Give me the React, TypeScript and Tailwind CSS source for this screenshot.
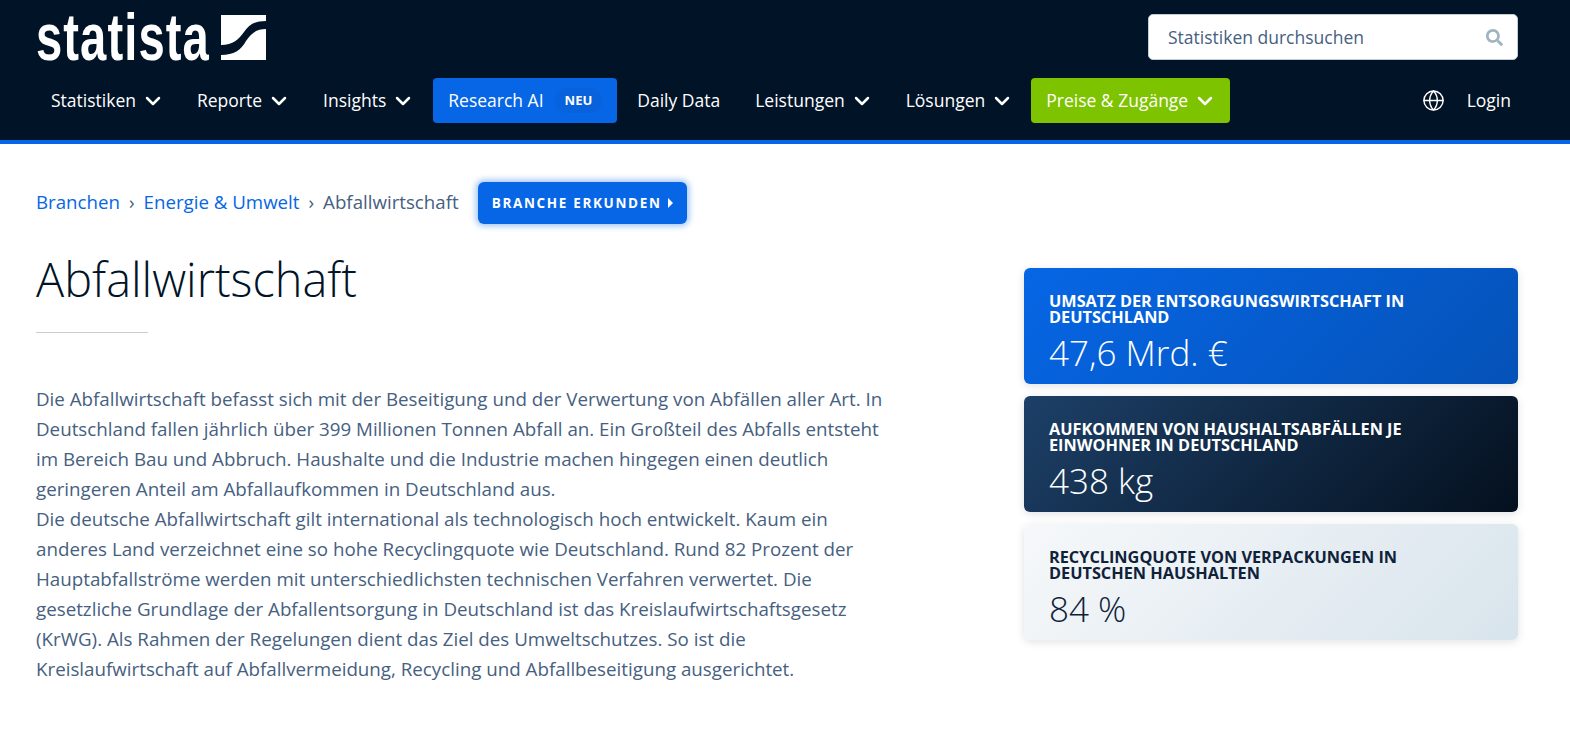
import React from 'react';
import { ChevronDown, Globe } from 'lucide-react';
import { FaSearch } from 'react-icons/fa';

const sans = "font-['Open_Sans',sans-serif]";

const NavItem: React.FC<{ label: string; chevron?: boolean }> = ({ label, chevron = true }) => (
  <div className="flex h-[45px] items-center gap-[5px] px-[15px] text-[17.5px] text-white">
    <span>{label}</span>
    {chevron && <ChevronDown className="h-[24px] w-[24px]" strokeWidth={2.5} />}
  </div>
);

const Logo: React.FC = () => (
  <div className="mt-[1px] flex h-[45px] w-[230px] items-center justify-between">
    <div className="w-[172px] origin-left scale-x-[0.715] font-['Liberation_Sans',sans-serif] text-[66px] leading-[45px] font-bold tracking-[1.5px] whitespace-nowrap text-white">
      statista
    </div>
    <svg viewBox="0 0 45 45" className="h-[45px] w-[45px]">
      <path
        fill="#fff"
        d="M0 0H45V6C33 6 28 10 23 17C18 24 12 30 0 30Z M45 14V45H0V40C13 40 20 35 25 26C30 18 36 14 45 14Z"
      />
    </svg>
  </div>
);

const StatCard: React.FC<{ title: string; value: string; className: string }> = ({ title, value, className }) => (
  <div className={`h-[116px] rounded-[6px] pt-[25px] pr-[20px] pl-[25px] shadow-[0_2px_8px_rgba(0,20,40,0.12)] ${className}`}>
    <div className="text-[16.3px] leading-[16.2px] font-bold uppercase">{title}</div>
    <div className="mt-[6px] text-[35px] leading-[44px] font-light">{value}</div>
  </div>
);

export default function App() {
  return (
    <div className={`min-h-[740px] bg-white ${sans}`}>
      <header className="h-[144px] border-b-[4px] border-[#0666e5] bg-[#001327] pr-[52px] pl-[36px]">
        <div className="flex items-start justify-between pt-[14px]">
          <Logo />
          <div className="flex h-[46px] w-[370px] items-center justify-between rounded-[5px] border border-[#c5cdd4] bg-white pr-[14px] pl-[19px] text-[17.5px] text-[#46607f]">
            <span>Statistiken durchsuchen</span>
            <FaSearch className="h-[17px] w-[17px] text-[#9fb4bf]" />
          </div>
        </div>
        <nav className="mt-[18px] flex items-center">
          <NavItem label="Statistiken" />
          <div className="w-[2px]" />
          <NavItem label="Reporte" />
          <div className="w-[2px]" />
          <NavItem label="Insights" />
          <div className="ml-[3px] flex h-[45px] w-[184px] items-center justify-between rounded-[4px] bg-[#0666e5] pr-[15px] pl-[15px] text-[17.5px] text-white">
            <span>Research AI</span>
            <span className="rounded-full bg-[#0762dc] px-[10px] py-[4px] text-[13px] leading-[17px] font-bold">NEU</span>
          </div>
          <div className="w-[5px]" />
          <NavItem label="Daily Data" chevron={false} />
          <div className="w-[5px]" />
          <NavItem label="Leistungen" />
          <div className="w-[2px]" />
          <NavItem label="Lösungen" />
          <div className="ml-[2px] flex h-[45px] items-center gap-[5px] rounded-[4px] bg-[#7ec300] pr-[13px] pl-[15px] text-[17.5px] text-white">
            <span>Preise &amp; Zugänge</span>
            <ChevronDown className="h-[24px] w-[24px]" strokeWidth={2.5} />
          </div>
          <div className="ml-auto flex items-center gap-[22px] pr-[7px] text-[17.5px] text-white">
            <Globe className="h-[23px] w-[23px]" strokeWidth={1.5} />
            <span>Login</span>
          </div>
        </nav>
      </header>

      <main className="pr-[52px] pl-[36px]">
        <div className="mt-[38px] flex h-[42px] items-center text-[18.7px]">
          <div className="flex pb-[2px]">
            <span className="text-[#0666e5]">Branchen</span>
            <span className="mx-[9px] text-[#46607f]">›</span>
            <span className="text-[#0666e5]">Energie &amp; Umwelt</span>
            <span className="mx-[9px] text-[#46607f]">›</span>
            <span className="text-[#46607f]">Abfallwirtschaft</span>
          </div>
          <div className="ml-[19px] flex h-[42px] w-[209px] items-center justify-center gap-[6px] rounded-[6px] bg-[#0666e5] text-[13.5px] font-bold tracking-[1.65px] text-white shadow-[0_0_6px_2px_rgba(6,102,229,0.4)]">
            BRANCHE ERKUNDEN
            <span className="h-0 w-0 border-y-[5px] border-l-[5px] border-y-transparent border-l-white" />
          </div>
        </div>

        <div className="mt-[24px] flex justify-between">
          <div className="w-[860px]">
            <h1 className="text-[46.9px] leading-[62px] font-light text-[#001327]">Abfallwirtschaft</h1>
            <div className="mt-[22px] h-[1px] w-[112px] bg-[#c9ced3]" />
            <div className="mt-[51px] text-[18.75px] leading-[30px] text-[#46607f]">
              <p>
                Die Abfallwirtschaft befasst sich mit der Beseitigung und der Verwertung von Abfällen aller Art. In Deutschland fallen jährlich über 399 Millionen Tonnen Abfall an. Ein Großteil des Abfalls entsteht im Bereich Bau und Abbruch. Haushalte und die Industrie machen hingegen einen deutlich geringeren Anteil am Abfallaufkommen in Deutschland aus.
              </p>
              <p>
                Die deutsche Abfallwirtschaft gilt international als technologisch hoch entwickelt. Kaum ein anderes Land verzeichnet eine so hohe Recyclingquote wie Deutschland. Rund 82 Prozent der Hauptabfallströme werden mit unterschiedlichsten technischen Verfahren verwertet. Die gesetzliche Grundlage der Abfallentsorgung in Deutschland ist das Kreislaufwirtschaftsgesetz (KrWG). Als Rahmen der Regelungen dient das Ziel des Umweltschutzes. So ist die Kreislaufwirtschaft auf Abfallvermeidung, Recycling und Abfallbeseitigung ausgerichtet.
              </p>
            </div>
          </div>
          <div className="flex w-[494px] flex-col gap-[12px] pt-[20px]">
            <StatCard
              className="bg-[linear-gradient(135deg,#0666e5,#0552b8)] text-white"
              title="Umsatz der Entsorgungswirtschaft in Deutschland"
              value="47,6 Mrd. €"
            />
            <StatCard
              className="bg-[linear-gradient(135deg,#1d4068,#04101e)] text-white"
              title="Aufkommen von Haushaltsabfällen je Einwohner in Deutschland"
              value="438 kg"
            />
            <StatCard
              className="bg-[linear-gradient(135deg,#f6f8fa,#d8e4ec)] text-[#0f2239]"
              title="Recyclingquote von Verpackungen in deutschen Haushalten"
              value="84 %"
            />
          </div>
        </div>
      </main>
    </div>
  );
}
